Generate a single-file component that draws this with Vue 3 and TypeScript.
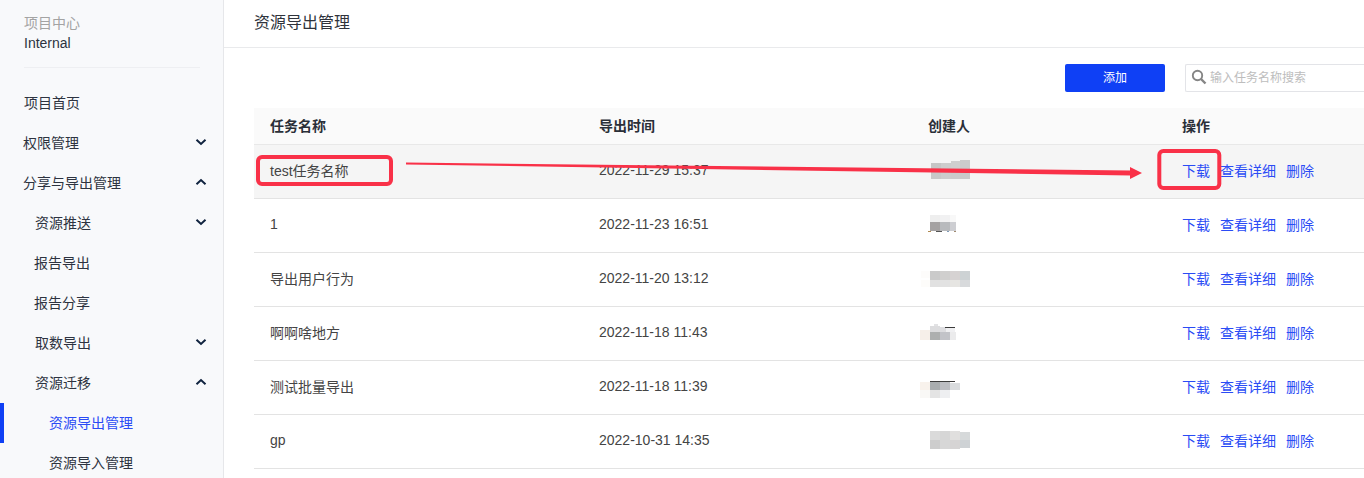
<script setup lang="ts">
interface NavItem { label: string; level: number; chevron?: 'up' | 'down'; active?: boolean }
const nav: NavItem[] = [
  { label: '项目首页', level: 0 },
  { label: '权限管理', level: 0, chevron: 'down' },
  { label: '分享与导出管理', level: 0, chevron: 'up' },
  { label: '资源推送', level: 1, chevron: 'down' },
  { label: '报告导出', level: 1 },
  { label: '报告分享', level: 1 },
  { label: '取数导出', level: 1, chevron: 'down' },
  { label: '资源迁移', level: 1, chevron: 'up' },
  { label: '资源导出管理', level: 2, active: true },
  { label: '资源导入管理', level: 2 },
]
const rows = [
  { name: 'test任务名称', time: '2022-11-29 15:37' },
  { name: '1', time: '2022-11-23 16:51' },
  { name: '导出用户行为', time: '2022-11-20 13:12' },
  { name: '啊啊啥地方', time: '2022-11-18 11:43' },
  { name: '测试批量导出', time: '2022-11-18 11:39' },
  { name: 'gp', time: '2022-10-31 14:35' },
]
const mosaic: [number, number, number, number, string][] = [
  [931, 163, 10, 9, '#c6c6c6'], [941, 163, 10, 9, '#cdcdcd'], [951, 161, 9, 11, '#cfcfcf'], [960, 160, 10, 12, '#cbcbcb'],
  [931, 172, 10, 7, '#c8c8c8'], [941, 172, 10, 7, '#cccccc'], [951, 172, 9, 7, '#cbcbcb'], [960, 172, 10, 7, '#c9caca'],
  [930, 215, 10, 7, '#eeeeee'], [940, 215, 10, 7, '#f1f1f2'], [950, 215, 6, 7, '#f8f8f8'],
  [930, 222, 10, 9, '#a5a2a2'], [940, 222, 10, 9, '#b8babd'], [950, 222, 6, 9, '#cdced2'],
  [928, 231, 3, 1, '#b08a50'], [936, 231, 6, 1, '#555555'], [947, 231, 2, 1, '#7f9bb8'], [954, 231, 2, 1, '#a08a70'],
  [921, 271, 9, 7, '#fdfcfb'], [930, 271, 10, 9, '#cacaca'], [940, 271, 10, 9, '#d0cfce'], [950, 271, 10, 9, '#d6d2d2'], [960, 271, 10, 9, '#cdd2d4'],
  [921, 280, 9, 7, '#fdfcfa'], [930, 280, 10, 7, '#e1e1e1'], [940, 280, 10, 7, '#e2e2e2'], [950, 280, 10, 7, '#e6e5e2'], [960, 280, 10, 7, '#d8dadc'],
  [930, 326, 10, 6, '#dcdcde'], [934, 324, 4, 2, '#e2e2e4'], [940, 327, 6, 5, '#dddde0'], [946, 327, 9, 5, '#f0f0f2'], [945, 327, 10, 1, '#3a3a3a'],
  [920, 330, 10, 10, '#f6efe9'], [930, 332, 10, 8, '#adafaf'], [940, 332, 10, 8, '#c2c3c8'], [950, 332, 6, 8, '#ebebec'],
  [930, 381, 25, 1, '#3c3c3c'],
  [920, 382, 10, 8, '#f8f2ec'], [930, 382, 10, 8, '#a9adaf'], [940, 382, 10, 8, '#bcbdc2'], [950, 383, 10, 7, '#dadcde'],
  [920, 390, 10, 8, '#f9f8f6'], [930, 390, 10, 8, '#e4e4e4'], [940, 390, 10, 8, '#eeeff1'],
  [930, 431, 10, 9, '#dadada'], [940, 431, 10, 9, '#d6d6d6'], [950, 431, 10, 9, '#e0dfde'], [960, 432, 10, 8, '#d6d9da'],
  [930, 440, 10, 9, '#cdcdcd'], [940, 440, 10, 9, '#d7d7d7'], [950, 440, 10, 9, '#d6d4d4'], [960, 440, 10, 8, '#ced2d5'],
]
</script>

<template>
  <div class="page">
    <aside class="side">
      <div class="project">
        <div class="project-label">项目中心</div>
        <div class="project-name">Internal</div>
      </div>
      <nav class="nav">
        <div
          v-for="item in nav"
          :key="item.label"
          class="nav-item"
          :class="['lv' + item.level, { active: item.active, plain: !item.chevron }]"
        >
          <span>{{ item.label }}</span>
          <svg v-if="item.chevron" class="chev" width="12" height="8" viewBox="0 0 12 8">
            <path
              :d="item.chevron === 'down' ? 'M1.5 1.8 6 6l4.500-4.200' : 'M1.500 6.200 6 2l4.500 4.200'"
              fill="none"
              stroke="#10233f"
              stroke-width="2"
            />
          </svg>
        </div>
      </nav>
    </aside>

    <main class="main">
      <header class="head">资源导出管理</header>
      <div class="body">
        <div class="toolbar">
          <button class="add" type="button">添加</button>
          <div class="search">
            <svg width="16" height="16" viewBox="0 0 16 16">
              <circle cx="6.500" cy="6.500" r="4.700" fill="none" stroke="#858585" stroke-width="1.900" />
              <path d="M10 10l4.500 4.500" stroke="#858585" stroke-width="2.400" fill="none" />
            </svg>
            <span>输入任务名称搜索</span>
          </div>
        </div>
        <table class="table">
          <colgroup>
            <col class="c1" /><col class="c2" /><col class="c3" /><col />
          </colgroup>
          <thead>
            <tr><th>任务名称</th><th>导出时间</th><th>创建人</th><th>操作</th></tr>
          </thead>
          <tbody>
            <tr v-for="(r, i) in rows" :key="r.name" :class="{ hover: i === 0 }">
              <td>{{ r.name }}</td>
              <td>{{ r.time }}</td>
              <td></td>
              <td class="ops"><a>下载</a><a>查看详细</a><a>删除</a></td>
            </tr>
          </tbody>
        </table>
      </div>
    </main>

    <svg class="overlay" width="1364" height="478" viewBox="0 0 1364 478">
      <rect v-for="(m, i) in mosaic" :key="i" :x="m[0]" :y="m[1]" :width="m[2]" :height="m[3]" :fill="m[4]" />
      <path d="M406 162.500 L1131 170.500 L1131 175.500 L406 164.500 Z" fill="#f93148" />
      <path d="M1130 167 L1142 173 L1130 179 Z" fill="#f93148" />
      <rect x="258" y="157" width="133" height="27" rx="4" fill="none" stroke="#f93148" stroke-width="4" />
      <rect x="1159.300" y="151" width="60" height="37" rx="4" fill="none" stroke="#f93148" stroke-width="4" />
    </svg>
  </div>
</template>

<style>
html, body { margin: 0; overflow: hidden; }
</style>

<style scoped>
.page {
  position: relative;
  display: flex;
  width: 1364px;
  height: 478px;
  overflow: hidden;
  background: #fff;
  color: #333;
  font-family: "Liberation Sans", "Noto Sans CJK SC", sans-serif;
  font-size: 14px;
}
.side {
  flex: none;
  box-sizing: border-box;
  width: 224px;
  background: #f8f9fb;
  border-right: 1px solid #e6e7ea;
  overflow: hidden;
}
.project {
  margin: 0 23px 0 24px;
  padding: 14px 0 15px;
  height: 38px;
  border-bottom: 1px solid #eeeff2;
  line-height: 19px;
}
.project-label { color: #a3a3a3; height: 20px; }
.project-name { color: #2c3340; }
.nav { padding-top: 15px; }
.nav-item {
  display: flex;
  align-items: center;
  justify-content: space-between;
  box-sizing: border-box;
  height: 40px;
  padding-right: 16px;
  padding-bottom: 2px;
  color: #2d3340;
  position: relative;
}
.lv0 { padding-left: 23px; }
.lv0.plain { padding-left: 24px; }
.lv1 { padding-left: 35px; }
.lv1.plain { padding-left: 34px; }
.lv2 { padding-left: 49px; }
.active { color: #2a4bf5; }
.active::before {
  content: "";
  position: absolute;
  left: 0;
  top: 0;
  bottom: 0;
  width: 4px;
  background: #0f40f5;
}
.main { flex: 1; min-width: 0; overflow: hidden; }
.head {
  box-sizing: border-box;
  height: 48px;
  padding: 13px 0 0 30px;
  border-bottom: 1px solid #e9eaec;
  font-size: 16px;
  line-height: 20px;
  color: #2f333b;
}
.body { padding: 16px 0 0 30px; }
.toolbar { display: flex; justify-content: flex-end; gap: 20px; height: 28px; margin-bottom: 16px; }
.add {
  box-sizing: border-box;
  width: 100px;
  height: 28px;
  padding: 0 0 4px;
  border: none;
  border-radius: 2px;
  background: #0f40f5;
  color: #fff;
  font: inherit;
  font-size: 12px;
}
.search {
  box-sizing: border-box;
  display: flex;
  align-items: center;
  gap: 3px;
  width: 179px;
  height: 28px;
  padding-left: 5px;
  border: 1px solid #e3e4e8;
  border-right: none;
  border-radius: 2px 0 0 2px;
  color: #bdbdbd;
  font-size: 12px;
}
.search span { margin-bottom: 3px; }
.search svg { margin-bottom: 2px; }
.table { width: 1110px; table-layout: fixed; border-collapse: collapse; }
.c1, .c2 { width: 329px; }
.c3 { width: 254px; }
th {
  box-sizing: border-box;
  height: 36px;
  padding: 0 0 2px 16px;
  background: #fafafa;
  border-bottom: 1px solid #e8e8e8;
  text-align: left;
  font-weight: 700;
  color: #2a2f38;
}
td {
  box-sizing: border-box;
  height: 54px;
  padding: 0 0 2px 16px;
  border-bottom: 1px solid #e3e3e3;
  color: #444;
}
.hover td { background: #f5f5f5; }
.ops a { color: #2a4bf5; margin-right: 10px; }
.overlay { position: absolute; left: 0; top: 0; pointer-events: none; }
</style>
